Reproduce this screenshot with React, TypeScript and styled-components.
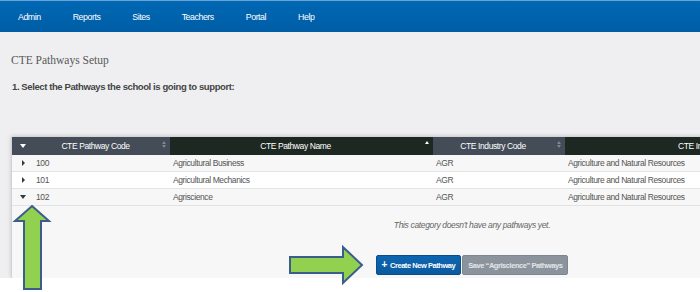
import React from 'react';
import styled, { createGlobalStyle } from 'styled-components';

const GlobalStyle = createGlobalStyle`
  html, body {
    margin: 0;
    padding: 0;
    background: #fff;
    overflow: hidden;
  }
  body {
    font-family: "Liberation Sans", Arial, sans-serif;
  }
`;

const Page = styled.div`
  position: relative;
  width: 700px;
  height: 292px;
  overflow: hidden;
  background: #fff;
`;

const NavBar = styled.nav`
  display: flex;
  align-items: center;
  gap: 32px;
  height: 31px;
  padding-left: 18px;
  background: linear-gradient(#0068b4, #005da6);
  border-top: 1px solid #6aa2d6;
`;

const NavItem = styled.a`
  color: #fff;
  font-size: 8.8px;
  letter-spacing: -0.45px;
  text-decoration: none;
`;

const Main = styled.main`
  background: #efeff1;
  padding: 21px 0 0 11px;
  overflow: hidden;
`;

const Title = styled.h1`
  margin: 0;
  font: 400 11.5px/14px "Liberation Serif", "Times New Roman", serif;
  color: #585858;
`;

const Step = styled.h2`
  margin: 14px 0 0 1px;
  font-size: 9.5px;
  line-height: 12px;
  font-weight: 700;
  letter-spacing: -0.4px;
  color: #444;
`;

const Table = styled.div`
  width: 920px;
  margin-top: 44px;
  border-left: 1px solid #d2d2d2;
  box-shadow: 0 -1px 4px rgba(0, 0, 0, 0.18);
`;

const cols = '21px 137px 263px 132px 306px 61px';

const HeadRow = styled.div`
  display: grid;
  grid-template-columns: ${cols};
  height: 18px;
`;

const HeadCell = styled.div<{ $dark?: boolean }>`
  position: relative;
  display: flex;
  align-items: center;
  justify-content: center;
  padding-right: 12px;
  background: ${(p) => (p.$dark ? '#1d2822' : '#434c57')};
  color: #fff;
  font-size: 8.5px;
  letter-spacing: -0.4px;
  white-space: nowrap;
`;

const ToggleHead = styled.div`
  display: flex;
  align-items: center;
  justify-content: center;
  background: #434c57;
`;

const Caret = styled.span<{ $dir: 'down' | 'right' | 'up'; $color: string }>`
  display: inline-block;
  width: 0;
  height: 0;
  border-style: solid;
  border-color: transparent;
  ${(p) =>
    p.$dir === 'down'
      ? `border-width: 4px 3px 0 3px; border-top-color: ${p.$color};`
      : p.$dir === 'up'
      ? `border-width: 0 2px 3px 2px; border-bottom-color: ${p.$color};`
      : `border-width: 3px 0 3px 3px; border-left-color: ${p.$color};`}
`;

const SortMark = styled.span`
  position: absolute;
  right: 4px;
  top: 4px;
  display: flex;
  flex-direction: column;
  gap: 1px;
`;

const BothSort = () => (
  <SortMark>
    <Caret $dir="up" $color="#7d8691" />
    <Caret $dir="down" $color="#7d8691" style={{ borderWidth: '3px 2px 0 2px' }} />
  </SortMark>
);

const Row = styled.div<{ $alt?: boolean }>`
  display: grid;
  grid-template-columns: ${cols};
  box-sizing: border-box;
  height: 17px;
  background: ${(p) => (p.$alt ? '#fff' : '#f7f7f7')};
  border-bottom: 1px solid #e3e3e3;
`;

const Cell = styled.div`
  display: flex;
  align-items: center;
  padding-left: 3px;
  color: #555;
  font-size: 8.5px;
  letter-spacing: -0.4px;
  white-space: nowrap;
`;

const ToggleCell = styled.div`
  display: flex;
  align-items: center;
  justify-content: center;
  padding-left: 1px;
`;

const Detail = styled.div`
  display: flex;
  flex-direction: column;
  align-items: center;
  height: 72px;
  padding-top: 13px;
  box-sizing: border-box;
  background: #f7f7f7;
`;

const Empty = styled.p`
  margin: 0;
  font-size: 8.5px;
  line-height: 12px;
  font-style: italic;
  letter-spacing: -0.35px;
  color: #666;
`;

const Actions = styled.div`
  display: flex;
  gap: 1px;
  margin-top: 24px;
`;

const Button = styled.button<{ $primary?: boolean }>`
  display: flex;
  align-items: center;
  gap: 3px;
  height: 20px;
  padding: 0 5px;
  border-radius: 2px;
  border: 1px solid ${(p) => (p.$primary ? '#0a4d88' : '#7e8790')};
  background: ${(p) => (p.$primary ? 'linear-gradient(#0d66b0, #0a5aa0)' : '#8b949d')};
  color: ${(p) => (p.$primary ? '#fff' : '#e4e7ea')};
  font-family: "Liberation Sans", Arial, sans-serif;
  font-size: 7.5px;
  font-weight: 700;
  letter-spacing: -0.45px;
  white-space: nowrap;
`;

const Plus = styled.span`
  font-size: 10px;
  line-height: 1;
  margin-top: -1px;
`;

const Callout = styled.svg<{ $left: number; $top: number }>`
  position: absolute;
  left: ${(p) => p.$left}px;
  top: ${(p) => p.$top}px;
  overflow: visible;
`;

const navItems = ['Admin', 'Reports', 'Sites', 'Teachers', 'Portal', 'Help'];

const pathways = [
  { code: '100', name: 'Agricultural Business', open: false },
  { code: '101', name: 'Agricultural Mechanics', open: false },
  { code: '102', name: 'Agriscience', open: true },
];

export default function App() {
  return (
    <Page>
      <GlobalStyle />
      <NavBar>
        {navItems.map((n) => (
          <NavItem key={n}>{n}</NavItem>
        ))}
      </NavBar>
      <Main>
        <Title>CTE Pathways Setup</Title>
        <Step>1. Select the Pathways the school is going to support:</Step>
        <Table>
          <HeadRow>
            <ToggleHead>
              <Caret $dir="down" $color="#fff" style={{ borderWidth: '4px 3px 0 3px' }} />
            </ToggleHead>
            <HeadCell>
              CTE Pathway Code
              <BothSort />
            </HeadCell>
            <HeadCell $dark>
              CTE Pathway Name
              <SortMark>
                <Caret $dir="up" $color="#fff" />
              </SortMark>
            </HeadCell>
            <HeadCell>
              CTE Industry Code
              <BothSort />
            </HeadCell>
            <HeadCell $dark>CTE Industry Name</HeadCell>
            <HeadCell $dark />
          </HeadRow>
          {pathways.map((p, i) => (
            <Row key={p.code} $alt={i === 1}>
              <ToggleCell>
                <Caret $dir={p.open ? 'down' : 'right'} $color="#2f3b47" />
              </ToggleCell>
              <Cell>{p.code}</Cell>
              <Cell>{p.name}</Cell>
              <Cell>AGR</Cell>
              <Cell>Agriculture and Natural Resources</Cell>
              <Cell />
            </Row>
          ))}
          <Detail>
            <Empty>This category doesn't have any pathways yet.</Empty>
            <Actions>
              <Button $primary>
                <Plus>+</Plus>Create New Pathway
              </Button>
              <Button>Save “Agriscience” Pathways</Button>
            </Actions>
          </Detail>
        </Table>
      </Main>

      <Callout $left={14} $top={205} width="37" height="90" viewBox="0 0 37 90">
        <polygon
          points="18,1 35,16 27,16 27,84 10,84 10,16 1,16"
          fill="#92d050"
          stroke="#3b5d8c"
          strokeWidth="2"
          strokeLinejoin="miter"
        />
      </Callout>
      <Callout $left={289} $top={246} width="75" height="38" viewBox="0 0 75 38">
        <polygon
          points="1,11 54,11 54,1 73,19 54,37 54,27 1,27"
          fill="#92d050"
          stroke="#3b5d8c"
          strokeWidth="2"
          strokeLinejoin="miter"
        />
      </Callout>
    </Page>
  );
}
